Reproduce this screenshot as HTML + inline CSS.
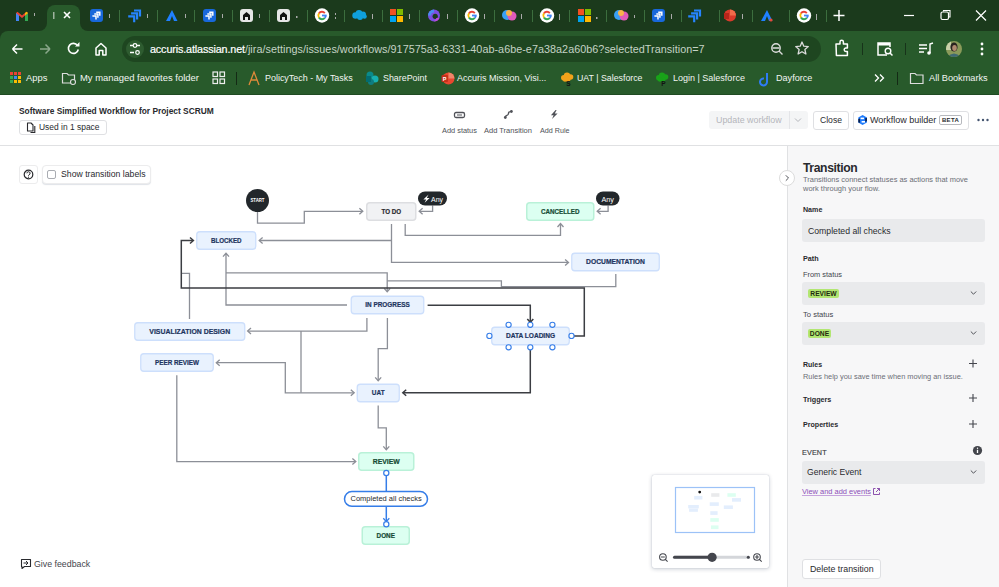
<!DOCTYPE html>
<html><head><meta charset="utf-8">
<style>
*{box-sizing:border-box;margin:0;padding:0}
html,body{width:999px;height:587px;overflow:hidden;background:#fff;font-family:"Liberation Sans",sans-serif;position:relative}
.a{position:absolute}
#tabs{left:0;top:0;width:999px;height:31px;background:#1b3a1c}
#toolbar{left:0;top:31px;width:999px;height:64px;background:#285a2b}
.sep{position:absolute;width:1px;background:#3d7a40}
.tt{color:#f2f5f2;font-size:12.5px;white-space:nowrap}
.hdr{left:0;top:95px;width:999px;height:51px;background:#fff;border-bottom:1px solid #e0e1e3}
.btn{position:absolute;border:1px solid #dfe0e3;border-radius:3px;background:#fff;color:#292a2e;font-size:9px;white-space:nowrap}
#panel{left:787px;top:146px;width:212px;height:441px;background:#f7f7f8;border-left:1px solid #e0e1e3}
.pl{position:absolute;left:14px;font-size:8px;color:#292a2e;font-weight:700;white-space:nowrap}
.ps{position:absolute;left:14px;font-size:8px;color:#505258;white-space:nowrap}
.sel{position:absolute;left:14px;width:183px;background:#e9eaec;border-radius:3px}
.chev{position:absolute;right:8px;top:50%;width:5px;height:5px;border-right:1.3px solid #44546f;border-bottom:1.3px solid #44546f;transform:translateY(-70%) rotate(45deg)}
.st{position:absolute;border-radius:3px;font-size:7.4px;font-weight:700;display:flex;align-items:center;justify-content:center;white-space:nowrap;letter-spacing:0.1px}
.bl{background:#e9f2ff;border:1px solid #cce0ff;color:#1c2b41}
.gr{background:#dcfff1;border:1px solid #baf3db;color:#164b35}
.gy{background:#f1f2f4;border:1px solid #dcdfe4;color:#172b4d}
</style></head><body>

<!-- ============ BROWSER TAB STRIP ============ -->
<div id="tabs" class="a"></div>
<!-- active tab -->
<div class="a" style="left:47px;top:5px;width:33px;height:27px;background:#285a2b;border-radius:8px 8px 0 0"></div>
<div class="a" style="left:39px;top:23px;width:8px;height:8px;background:#285a2b"></div>
<div class="a" style="left:31px;top:15px;width:16px;height:16px;background:#1b3a1c;border-radius:0 0 8px 0"></div>
<div class="a" style="left:80px;top:23px;width:8px;height:8px;background:#285a2b"></div>
<div class="a" style="left:80px;top:15px;width:16px;height:16px;background:#1b3a1c;border-radius:0 0 0 8px"></div>

<div class="a" style="left:0;top:31px;width:10px;height:10px;background:#1b3a1c"></div><div id="toolbar" class="a" style="border-radius:8px 0 0 0"></div>
<div class="a" style="left:0;top:94px;width:999px;height:1px;background:#1f4a22"></div>

<!-- tab icons -->
<svg class="a" style="left:0;top:0" width="999" height="31">
 <!-- gmail -->
 <g transform="translate(16,11)">
  <path d="M0 2 L0 10 L3 10 L3 4.5 L6 7 L9 4.5 L9 10 L12 10 L12 2 L10.5 0.8 L6 4.5 L1.5 0.8 Z" fill="#ea4335"/>
  <path d="M0 2 L0 10 L3 10 L3 4.5 Z" fill="#4285f4"/><path d="M12 2 L12 10 L9 10 L9 4.5 Z" fill="#34a853"/>
  <path d="M10.5 0.8 L12 2 L9 4.5 L9 2 Z" fill="#fbbc04"/>
 </g>
 <rect x="34" y="13" width="1" height="3" fill="#aaa"/>
 <rect x="53" y="12" width="1.5" height="7" fill="#9fb39f"/>
 <path d="M64 12 L70 18 M70 12 L64 18" stroke="#fff" stroke-width="1.6"/>
 <!-- jira squares -->
 <rect x="90" y="9" width="13" height="13" rx="3" fill="#1868db"/><path d="M96.2 12.2 H99.8 V15.799999999999999" stroke="#fff" stroke-width="1.5" fill="none"/><path d="M94.3 14.1 H97.89999999999999 V17.7" stroke="#fff" stroke-width="1.5" fill="none"/><path d="M92.4 16.0 H96.0 V19.6" stroke="#fff" stroke-width="1.5" fill="none"/>
 <rect x="109" y="14" width="1" height="4" fill="#aaa"/>
 <rect x="119" y="10" width="1" height="12" fill="#3c6e3e"/>
 <!-- jira stacked -->
 <path d="M134.0 10.5 H140.0 V16.5" stroke="#2684ff" stroke-width="2.2" fill="none"/><path d="M131.1 13.4 H137.1 V19.4" stroke="#2684ff" stroke-width="2.2" fill="none"/><path d="M128.2 16.3 H134.2 V22.3" stroke="#2684ff" stroke-width="2.2" fill="none"/>
 <rect x="147" y="14" width="1" height="4" fill="#aaa"/>
 <rect x="157" y="10" width="1" height="12" fill="#3c6e3e"/>
 <!-- atlassian A -->
 <path d="M172 10 l5.5 11 h-3.5 l-2 -5 l-2 5 h-4 z" fill="#1f80ff"/>
 <rect x="185" y="14" width="1" height="4" fill="#aaa"/>
 <rect x="194" y="10" width="1" height="12" fill="#3c6e3e"/>
 <rect x="203" y="9" width="13" height="13" rx="3" fill="#1868db"/><path d="M209.20000000000002 12.2 H212.8 V15.799999999999999" stroke="#fff" stroke-width="1.5" fill="none"/><path d="M207.3 14.1 H210.9 V17.7" stroke="#fff" stroke-width="1.5" fill="none"/><path d="M205.4 16.0 H209.0 V19.6" stroke="#fff" stroke-width="1.5" fill="none"/>
 <rect x="222" y="14" width="1" height="4" fill="#aaa"/>
 <rect x="232" y="10" width="1" height="12" fill="#3c6e3e"/>
 <rect x="240" y="9" width="13" height="13" rx="3" fill="#e6e6e6"/><path d="M243 20 v-5 l3.5 -3 l3.5 3 v5 h-2 v-3 h-3 v3z" fill="#111"/>
 <rect x="259" y="14" width="1" height="4" fill="#aaa"/>
 <rect x="269" y="10" width="1" height="12" fill="#3c6e3e"/>
 <rect x="277" y="9" width="13" height="13" rx="3" fill="#e6e6e6"/><path d="M280 20 v-5 l3.5 -3 l3.5 3 v5 h-2 v-3 h-3 v3z" fill="#111"/>
 <rect x="296" y="16" width="1.5" height="2" fill="#aaa"/>
 <rect x="307" y="10" width="1" height="12" fill="#3c6e3e"/>
 <g id="gg"><circle cx="322" cy="15.5" r="7.2" fill="#fff"/><path d="M318.97 13.38 A3.7 3.7 0 0 1 324.83 13.12" stroke="#ea4335" stroke-width="1.9" fill="none"/><path d="M318.97 17.62 A3.7 3.7 0 0 1 318.97 13.38" stroke="#fbbc04" stroke-width="1.9" fill="none"/><path d="M324.83 17.88 A3.7 3.7 0 0 1 318.97 17.62" stroke="#34a853" stroke-width="1.9" fill="none"/><path d="M325.70 15.50 A3.7 3.7 0 0 1 324.83 17.88" stroke="#4285f4" stroke-width="1.9" fill="none"/><path d="M322 15.5 H326.59999999999997" stroke="#4285f4" stroke-width="1.8"/></g>
 <rect x="335" y="13" width="1" height="2" fill="#aaa"/><rect x="335" y="17" width="1" height="2" fill="#aaa"/>
 <rect x="344" y="10" width="1" height="12" fill="#3c6e3e"/>
 <g fill="#0fa0dc"><circle cx="355.5" cy="15.5" r="3.2"/><circle cx="359" cy="13.2" r="3.3"/><circle cx="363" cy="14.5" r="3"/><circle cx="360" cy="17" r="3"/><circle cx="364.5" cy="16.5" r="2.3"/></g>
 <rect x="372" y="14" width="1" height="5" fill="#aaa"/>
 <rect x="382" y="10" width="1" height="12" fill="#3c6e3e"/>
 <rect x="390" y="9" width="6" height="6" fill="#f25022"/><rect x="397" y="9" width="6" height="6" fill="#7fba00"/><rect x="390" y="16" width="6" height="6" fill="#00a4ef"/><rect x="397" y="16" width="6" height="6" fill="#ffb900"/>
 <rect x="409" y="14" width="1" height="5" fill="#aaa"/>
 <rect x="419" y="10" width="1" height="12" fill="#3c6e3e"/>
 <circle cx="434" cy="15.5" r="6" fill="#7b4fe0"/><path d="M428 15.5 a6 6 0 0 1 6 -6 v3 a3 3 0 0 0 -3 3z" fill="#4a8cf0"/><circle cx="435.2" cy="16.3" r="2.6" fill="#1b3a1c"/><path d="M434 21.5 a6 6 0 0 0 5.5 -3.5 h-3z" fill="#c04ad8"/>
 <rect x="447" y="14" width="1" height="5" fill="#aaa"/>
 <rect x="457" y="10" width="1" height="12" fill="#3c6e3e"/>
 <circle cx="472" cy="15.5" r="7.2" fill="#fff"/><path d="M468.97 13.38 A3.7 3.7 0 0 1 474.83 13.12" stroke="#ea4335" stroke-width="1.9" fill="none"/><path d="M468.97 17.62 A3.7 3.7 0 0 1 468.97 13.38" stroke="#fbbc04" stroke-width="1.9" fill="none"/><path d="M474.83 17.88 A3.7 3.7 0 0 1 468.97 17.62" stroke="#34a853" stroke-width="1.9" fill="none"/><path d="M475.70 15.50 A3.7 3.7 0 0 1 474.83 17.88" stroke="#4285f4" stroke-width="1.9" fill="none"/><path d="M472 15.5 H476.59999999999997" stroke="#4285f4" stroke-width="1.8"/>
 <rect x="484" y="14" width="1" height="5" fill="#aaa"/>
 <rect x="494" y="10" width="1" height="12" fill="#3c6e3e"/>
 <circle cx="507" cy="15" r="5" fill="#3aa0f3"/><circle cx="512" cy="16" r="4.5" fill="#e05ab8"/><circle cx="509" cy="13" r="3" fill="#f8b24a"/>
 <rect x="521" y="14" width="1" height="5" fill="#aaa"/>
 <rect x="532" y="10" width="1" height="12" fill="#3c6e3e"/>
 <circle cx="547" cy="15.5" r="7.2" fill="#fff"/><path d="M543.97 13.38 A3.7 3.7 0 0 1 549.83 13.12" stroke="#ea4335" stroke-width="1.9" fill="none"/><path d="M543.97 17.62 A3.7 3.7 0 0 1 543.97 13.38" stroke="#fbbc04" stroke-width="1.9" fill="none"/><path d="M549.83 17.88 A3.7 3.7 0 0 1 543.97 17.62" stroke="#34a853" stroke-width="1.9" fill="none"/><path d="M550.70 15.50 A3.7 3.7 0 0 1 549.83 17.88" stroke="#4285f4" stroke-width="1.9" fill="none"/><path d="M547 15.5 H551.6" stroke="#4285f4" stroke-width="1.8"/>
 <rect x="559" y="14" width="1" height="6" fill="#aaa"/>
 <rect x="569" y="10" width="1" height="12" fill="#3c6e3e"/>
 <rect x="578" y="9" width="6" height="6" fill="#f25022"/><rect x="585" y="9" width="6" height="6" fill="#7fba00"/><rect x="578" y="16" width="6" height="6" fill="#00a4ef"/><rect x="585" y="16" width="6" height="6" fill="#ffb900"/>
 <rect x="596" y="17" width="1.5" height="2" fill="#aaa"/>
 <rect x="606" y="10" width="1" height="12" fill="#3c6e3e"/>
 <circle cx="619" cy="15" r="5" fill="#3aa0f3"/><circle cx="624" cy="16" r="4.5" fill="#e05ab8"/><circle cx="621" cy="13" r="3" fill="#f8b24a"/>
 <rect x="634" y="15" width="1" height="3" fill="#aaa"/>
 <rect x="644" y="10" width="1" height="12" fill="#3c6e3e"/>
 <rect x="652" y="9" width="13" height="13" rx="3" fill="#1868db"/><path d="M658.1999999999999 12.2 H661.8 V15.799999999999999" stroke="#fff" stroke-width="1.5" fill="none"/><path d="M656.3 14.1 H659.9 V17.7" stroke="#fff" stroke-width="1.5" fill="none"/><path d="M654.4 16.0 H658.0 V19.6" stroke="#fff" stroke-width="1.5" fill="none"/>
 <rect x="671" y="14" width="1" height="5" fill="#aaa"/>
 <rect x="681" y="10" width="1" height="12" fill="#3c6e3e"/>
 <path d="M694.0 10.5 H700.0 V16.5" stroke="#2684ff" stroke-width="2.2" fill="none"/><path d="M691.1 13.4 H697.1 V19.4" stroke="#2684ff" stroke-width="2.2" fill="none"/><path d="M688.2 16.3 H694.2 V22.3" stroke="#2684ff" stroke-width="2.2" fill="none"/>
 <rect x="719" y="10" width="1" height="12" fill="#3c6e3e"/>
 <circle cx="730" cy="15.5" r="6" fill="#d93a2b"/><path d="M730 9.5 a6 6 0 0 1 6 6 h-6z" fill="#f06b4a"/><rect x="724" y="13" width="5" height="6" fill="#b7251a"/>
 <rect x="742" y="14" width="1" height="5" fill="#aaa"/>
 <rect x="752" y="10" width="1" height="12" fill="#3c6e3e"/>
 <path d="M767 10 l5.5 11 h-3.5 l-2 -5 l-2 5 h-4 z" fill="#1f80ff"/><circle cx="771" cy="20" r="1.6" fill="#e5493a"/>
 <rect x="789" y="10" width="1" height="12" fill="#3c6e3e"/>
 <circle cx="804" cy="15.5" r="7.2" fill="#fff"/><path d="M800.97 13.38 A3.7 3.7 0 0 1 806.83 13.12" stroke="#ea4335" stroke-width="1.9" fill="none"/><path d="M800.97 17.62 A3.7 3.7 0 0 1 800.97 13.38" stroke="#fbbc04" stroke-width="1.9" fill="none"/><path d="M806.83 17.88 A3.7 3.7 0 0 1 800.97 17.62" stroke="#34a853" stroke-width="1.9" fill="none"/><path d="M807.70 15.50 A3.7 3.7 0 0 1 806.83 17.88" stroke="#4285f4" stroke-width="1.9" fill="none"/><path d="M804 15.5 H808.6" stroke="#4285f4" stroke-width="1.8"/>
 <rect x="816" y="14" width="1" height="6" fill="#aaa"/>
 <rect x="826" y="10" width="1" height="12" fill="#3c6e3e"/>
 <path d="M839 10 v11 M833.5 15.5 h11" stroke="#fff" stroke-width="1.5"/>
 <path d="M904 15.5 h10" stroke="#fff" stroke-width="1.2"/>
 <rect x="941" y="12" width="7.5" height="7.5" rx="1.5" stroke="#fff" stroke-width="1.2" fill="none"/><path d="M943.5 11.5 v-1 h6.5 v6.5 h-1" stroke="#fff" stroke-width="1.1" fill="none"/>
 <path d="M976 10.5 l10 10 M986 10.5 l-10 10" stroke="#fff" stroke-width="1.2"/>
</svg>

<!-- toolbar -->
<svg class="a" style="left:0;top:31px" width="999" height="64">
 <path d="M12.5 18 h10 M12.5 18 l4.5 -4.5 M12.5 18 l4.5 4.5" stroke="#fff" stroke-width="1.5" fill="none"/>
 <path d="M40 18 h10 M50 18 l-4.5 -4.5 M50 18 l-4.5 4.5" stroke="#8aa88b" stroke-width="1.5" fill="none"/>
 <path d="M77.5 14.5 a5 5 0 1 0 0.8 4" stroke="#fff" stroke-width="1.6" fill="none"/><path d="M79.5 11 v4.5 h-4.5z" fill="#fff"/>
 <path d="M96 24 v-7 l5 -4.5 l5 4.5 v7 h-3.2 v-4.5 h-3.6 v4.5 z" stroke="#fff" stroke-width="1.5" fill="none" stroke-linejoin="round"/>
 <rect x="122" y="5" width="699" height="26" rx="13" fill="#1e4620"/>
 <circle cx="135" cy="18" r="9" fill="#2e5c30"/>
 <path d="M130 14.5 h3 M137 14.5 h3 M130 21.5 h4 M140 21.5 h0" stroke="#fff" stroke-width="1.3"/><circle cx="135" cy="14.5" r="1.8" stroke="#fff" stroke-width="1.2" fill="none"/><circle cx="137.5" cy="21.5" r="1.8" stroke="#fff" stroke-width="1.2" fill="none"/>
 <circle cx="776" cy="17" r="4.2" stroke="#ddd" stroke-width="1.4" fill="none"/><path d="M772.5 17 h7 M779 20 l3.5 3.5" stroke="#ddd" stroke-width="1.4"/>
 <path d="M802 11 l1.8 4.2 l4.5 .4 l-3.4 3 l1 4.4 l-3.9 -2.3 l-3.9 2.3 l1 -4.4 l-3.4 -3 l4.5 -.4z" stroke="#ddd" stroke-width="1.3" fill="none" stroke-linejoin="round"/>
 <path d="M836 13 h4 v-2 a1.7 1.7 0 0 1 3.4 0 v2 h4 v4 h-1.5 a1.7 1.7 0 0 0 0 3.4 h1.5 v4 h-11 z" stroke="#fff" stroke-width="1.5" fill="none" stroke-linejoin="round"/>
 <rect x="862" y="12" width="1" height="12" fill="#17331a"/>
 <path d="M887 24 h-9 v-12 h12 v4" stroke="#fff" stroke-width="1.5" fill="none"/><circle cx="888" cy="20" r="2.8" stroke="#fff" stroke-width="1.4" fill="none"/><path d="M890 22 l2.5 2.5" stroke="#fff" stroke-width="1.5"/><rect x="878" y="12" width="12" height="2.5" fill="#fff"/>
 <rect x="905" y="12" width="1" height="12" fill="#17331a"/>
 <path d="M919 14 h8 M919 17.5 h8 M919 21 h5" stroke="#fff" stroke-width="1.4"/><path d="M930 22 v-9 l3 -1" stroke="#fff" stroke-width="1.4" fill="none"/><circle cx="929" cy="22" r="1.8" fill="#fff"/>
 <clipPath id="av"><circle cx="954" cy="18" r="8"/></clipPath><g clip-path="url(#av)"><rect x="945" y="9" width="18" height="18" fill="#8a9a5a"/><rect x="945" y="9" width="6" height="10" fill="#c8d0a8"/><ellipse cx="954" cy="16" rx="3.6" ry="4.6" fill="#2a2420"/><ellipse cx="954.5" cy="17" rx="2.3" ry="3" fill="#b08a70"/><path d="M946 27 q8 -9 16 0z" fill="#3f6a72"/></g>
 <circle cx="982" cy="13" r="1.4" fill="#fff"/><circle cx="982" cy="18" r="1.4" fill="#fff"/><circle cx="982" cy="23" r="1.4" fill="#fff"/>
</svg>
<div class="a tt" style="left:150px;font-size:10.8px;letter-spacing:0px;top:43px"><span style="color:#fff;letter-spacing:-0.14px;-webkit-text-stroke:0.2px #fff">accuris.atlassian.net</span><span style="color:#c5d3c5;letter-spacing:0.034px">/jira/settings/issues/workflows/917575a3-6331-40ab-a6be-e7a38a2a60b6?selectedTransition=7</span></div>

<!-- bookmarks bar -->
<svg class="a" style="left:0;top:65px" width="999" height="30">
 <g>
  <rect x="10" y="7" width="3" height="3" fill="#ea4335"/><rect x="14" y="7" width="3" height="3" fill="#ea4335"/><rect x="18" y="7" width="3" height="3" fill="#ea4335"/>
  <rect x="10" y="11" width="3" height="3" fill="#34a853"/><rect x="14" y="11" width="3" height="3" fill="#4285f4"/><rect x="18" y="11" width="3" height="3" fill="#fbbc04"/>
  <rect x="10" y="15" width="3" height="3" fill="#34a853"/><rect x="14" y="15" width="3" height="3" fill="#fbbc04"/><rect x="18" y="15" width="3" height="3" fill="#fbbc04"/>
 </g>
 <path d="M62.5 8.5 h4.5 l1.5 1.5 h6 v8 h-12 z" stroke="#ddd" stroke-width="1.2" fill="none"/><circle cx="73" cy="17" r="2.5" fill="#285a2b" stroke="#ddd" stroke-width="1.1"/>
 <rect x="213" y="7" width="4.5" height="4.5" stroke="#eee" stroke-width="1.2" fill="none"/><rect x="220" y="7" width="4.5" height="4.5" stroke="#eee" stroke-width="1.2" fill="none"/><rect x="213" y="14" width="4.5" height="4.5" stroke="#eee" stroke-width="1.2" fill="none"/><rect x="220" y="14" width="4.5" height="4.5" stroke="#eee" stroke-width="1.2" fill="none"/>
 <rect x="236" y="7" width="1" height="13" fill="#142a15"/>
 <path d="M249 20 l5 -13 l5 13 M251 15 h6" stroke="#e08a3a" stroke-width="1.3" fill="none"/>
 <circle cx="370" cy="10" r="3.5" fill="#0a8a8a"/><circle cx="375" cy="14" r="3.5" fill="#17b0b0"/><circle cx="371" cy="17" r="3" fill="#0f7c80"/><rect x="366" y="11" width="5" height="6" fill="#036c70"/>
 <circle cx="448.5" cy="13.5" r="6" fill="#e8472f"/><path d="M448.5 7.5 a6 6 0 0 1 6 6 h-6z" fill="#f0866a"/><rect x="441.5" y="10" width="6.5" height="7" rx="1" fill="#c4311b"/><text x="442.8" y="15.8" font-size="5.5" font-weight="700" fill="#fff">P</text>
 <g fill="#f2a31b"><circle cx="563.8" cy="12.8" r="2.8"/><circle cx="567" cy="10.8" r="3.2"/><circle cx="570.5" cy="12" r="2.8"/><circle cx="568" cy="14.2" r="2.5"/><circle cx="565" cy="14.5" r="2.2"/></g><text x="566.2" y="20.8" font-size="6.5" font-weight="700" fill="#111">S</text>
 <g fill="#19a319"><circle cx="658.8" cy="12.8" r="2.8"/><circle cx="662" cy="10.8" r="3.2"/><circle cx="665.5" cy="12" r="2.8"/><circle cx="663" cy="14.2" r="2.5"/><circle cx="660" cy="14.5" r="2.2"/></g><text x="661.2" y="20.8" font-size="6.5" font-weight="700" fill="#111">P</text>
 <path d="M767 8 v9 a3.5 3.5 0 1 1 -3 -3.5" stroke="#2f7cf6" stroke-width="2" fill="none"/>
 <path d="M875 9.5 l3.5 3.5 l-3.5 3.5 M880 9.5 l3.5 3.5 l-3.5 3.5" stroke="#fff" stroke-width="1.3" fill="none"/>
 <rect x="897" y="7" width="1" height="13" fill="#142a15"/>
 <path d="M910.5 8.5 h4.5 l1.5 1.5 h6.5 v8.5 h-12.5 z" stroke="#ddd" stroke-width="1.2" fill="none"/>
</svg>
<div class="a tt" style="left:26px;top:72.20px;font-size:9.4px">Apps</div>
<div class="a tt" style="left:80px;top:72.17px;font-size:9.43px">My managed favorites folder</div>
<div class="a tt" style="left:265px;top:72.63px;font-size:8.95px">PolicyTech - My Tasks</div>
<div class="a tt" style="left:383px;top:72.67px;font-size:8.9px">SharePoint</div>
<div class="a tt" style="left:457px;top:72.58px;font-size:9.0px">Accuris Mission, Visi...</div>
<div class="a tt" style="left:577px;top:72.77px;font-size:8.8px">UAT | Salesforce</div>
<div class="a tt" style="left:673px;top:72.58px;font-size:9.0px">Login | Salesforce</div>
<div class="a tt" style="left:776px;top:73.4px;font-size:9.1px">Dayforce</div>
<div class="a tt" style="left:929px;top:73.3px;font-size:9.2px">All Bookmarks</div>


<!-- ============ JIRA HEADER ============ -->
<div class="a hdr"></div>


<!-- header content -->
<div class="a" style="left:19px;top:106px;font-size:8.4px;font-weight:700;color:#292a2e;white-space:nowrap">Software Simplified Workflow for Project SCRUM</div>
<div class="btn" style="left:19px;top:120px;width:88px;height:15px"></div>
<svg class="a" style="left:26px;top:121.5px" width="11" height="12"><path d="M1.5 1 h3.5 l2 2 v6 h-5.5 z" stroke="#292a2e" stroke-width="1.1" fill="none" stroke-linejoin="round"/><path d="M8.8 4 v6.5 h-4.3" stroke="#292a2e" stroke-width="1.1" fill="none"/></svg>
<div class="a" style="left:39px;top:122.3px;font-size:8.45px;color:#292a2e;white-space:nowrap">Used in 1 space</div>

<svg class="a" style="left:440px;top:105px" width="140" height="18">
 <rect x="14.5" y="7.5" width="10" height="5" rx="1.5" stroke="#505258" stroke-width="1.3" fill="none"/><path d="M17 10 h5" stroke="#505258" stroke-width="1"/>
 <path d="M65.3 12.3 C65.3 9.5 68.3 10.5 68.3 9.3 C68.3 7.5 68.6 6.5 71.4 6.5" stroke="#505258" stroke-width="1.2" fill="none"/><circle cx="65.3" cy="12.5" r="1.4" fill="#505258"/><circle cx="71.4" cy="6.5" r="1.4" fill="#505258"/>
 <path d="M115.6 4.9 L110.9 10.2 H113.6 L112 14 L117.6 8.4 H114.8 L116.6 4.9Z" fill="#505258"/>
</svg>
<div class="a" style="left:442px;top:125.5px;font-size:7.4px;color:#505258;white-space:nowrap">Add status</div>
<div class="a" style="left:484px;top:125.5px;font-size:7.5px;color:#505258;white-space:nowrap">Add Transition</div>
<div class="a" style="left:540px;top:125.5px;font-size:7.2px;color:#505258;white-space:nowrap">Add Rule</div>

<div class="a" style="left:709px;top:111px;width:99px;height:18px;background:#f4f5f6;border-radius:3px"></div>
<div class="a" style="left:789px;top:111px;width:1px;height:18px;background:#e4e5e8"></div>
<div class="a" style="left:716px;top:115px;font-size:8.9px;color:#b4b6bb;white-space:nowrap">Update workflow</div>
<svg class="a" style="left:794px;top:117px" width="8" height="6"><path d="M1 1.5 l3 3 l3 -3" stroke="#b4b6bb" stroke-width="1" fill="none"/></svg>
<div class="btn" style="left:813px;top:111px;width:36px;height:19px"></div>
<div class="a" style="left:820px;top:115px;font-size:8.6px;color:#292a2e;white-space:nowrap">Close</div>
<div class="btn" style="left:853px;top:111px;width:116px;height:19px"></div>
<svg class="a" style="left:857px;top:114px" width="12" height="12"><path d="M5.6 1 L9.9 3.5 V8.5 L5.6 11 L1.3 8.5 V3.5 Z" fill="#1d7afc"/><path d="M1.3 5 L3 4.4 V8.8 L1.3 8.5Z" fill="#0a1f4a"/><path d="M8.2 4.3 L9.9 3.8 V7.2 L8.2 7.7Z" fill="#0a1f4a"/><rect x="3.6" y="3.6" width="3.4" height="1.6" fill="#fff"/><rect x="4.6" y="7" width="3.4" height="1.6" fill="#fff"/></svg>
<div class="a" style="left:870px;top:115px;font-size:9px;color:#292a2e;white-space:nowrap">Workflow builder</div>
<div class="a" style="left:939px;top:115px;width:23px;height:10px;border:1px solid #b7b9be;border-radius:2px;font-size:6px;font-weight:700;color:#292a2e;text-align:center;line-height:8px;letter-spacing:0.3px">BETA</div>
<svg class="a" style="left:975px;top:117px" width="16" height="6"><circle cx="3.5" cy="3" r="1.2" fill="#44546f"/><circle cx="8" cy="3" r="1.2" fill="#44546f"/><circle cx="12.5" cy="3" r="1.2" fill="#44546f"/></svg>

<svg class="a" style="left:0;top:0" width="999" height="587">
<path d="M257.5 212 V223.1 H304.3 V211.3 H362.5" stroke="#8c8f97" stroke-width="1.3" fill="none"/>
<path d="M432.6 205.5 V211.3 H419.5" stroke="#8c8f97" stroke-width="1.3" fill="none"/>
<path d="M608.1 205.5 V211.3 H597.5" stroke="#8c8f97" stroke-width="1.3" fill="none"/>
<path d="M405.2 224 V235.4 H560.5 V224" stroke="#8c8f97" stroke-width="1.3" fill="none"/>
<path d="M391.5 224 V262.4 H568" stroke="#8c8f97" stroke-width="1.3" fill="none"/>
<path d="M391.5 240.5 H259.5" stroke="#8c8f97" stroke-width="1.3" fill="none"/>
<path d="M226 272.8 H387.2 V291.5" stroke="#8c8f97" stroke-width="1.3" fill="none"/>
<path d="M615.8 274 V286.6 H501.4 V280.9 H387.2" stroke="#8c8f97" stroke-width="1.3" fill="none"/>
<path d="M347 305 H226 V253.5" stroke="#8c8f97" stroke-width="1.3" fill="none"/>
<path d="M366.9 318 V331.1 H248" stroke="#8c8f97" stroke-width="1.3" fill="none"/>
<path d="M189.5 319 V273.4 H181.2" stroke="#8c8f97" stroke-width="1.3" fill="none"/>
<path d="M301 331.1 V392.8" stroke="#8c8f97" stroke-width="1.3" fill="none"/>
<path d="M216.5 362.7 H285.3 V392.8 H354" stroke="#8c8f97" stroke-width="1.3" fill="none"/>
<path d="M387.4 318 V348.6 H378.2 V380.5" stroke="#8c8f97" stroke-width="1.3" fill="none"/>
<path d="M378.2 405.6 V427.9 H386.3 V449.5" stroke="#8c8f97" stroke-width="1.3" fill="none"/>
<path d="M176.8 375.3 V461.6 H355.5" stroke="#8c8f97" stroke-width="1.3" fill="none"/>
<path d="M359.40000000000003 208.3 L362.8 211.3 L359.40000000000003 214.3" stroke="#8c8f97" stroke-width="1.3" fill="none" stroke-linejoin="miter"/>
<path d="M422.59999999999997 208.3 L419.2 211.3 L422.59999999999997 214.3" stroke="#8c8f97" stroke-width="1.3" fill="none" stroke-linejoin="miter"/>
<path d="M600.6 208.3 L597.2 211.3 L600.6 214.3" stroke="#8c8f97" stroke-width="1.3" fill="none" stroke-linejoin="miter"/>
<path d="M557.5 227.0 L560.5 223.6 L563.5 227.0" stroke="#8c8f97" stroke-width="1.3" fill="none" stroke-linejoin="miter"/>
<path d="M565.1 259.4 L568.5 262.4 L565.1 265.4" stroke="#8c8f97" stroke-width="1.3" fill="none" stroke-linejoin="miter"/>
<path d="M262.59999999999997 237.5 L259.2 240.5 L262.59999999999997 243.5" stroke="#8c8f97" stroke-width="1.3" fill="none" stroke-linejoin="miter"/>
<path d="M384.2 288.40000000000003 L387.2 291.8 L390.2 288.40000000000003" stroke="#8c8f97" stroke-width="1.3" fill="none" stroke-linejoin="miter"/>
<path d="M223.0 256.59999999999997 L226 253.2 L229.0 256.59999999999997" stroke="#8c8f97" stroke-width="1.3" fill="none" stroke-linejoin="miter"/>
<path d="M251.0 328.1 L247.6 331.1 L251.0 334.1" stroke="#8c8f97" stroke-width="1.3" fill="none" stroke-linejoin="miter"/>
<path d="M350.8 389.8 L354.2 392.8 L350.8 395.8" stroke="#8c8f97" stroke-width="1.3" fill="none" stroke-linejoin="miter"/>
<path d="M219.70000000000002 359.7 L216.3 362.7 L219.70000000000002 365.7" stroke="#8c8f97" stroke-width="1.3" fill="none" stroke-linejoin="miter"/>
<path d="M375.2 377.40000000000003 L378.2 380.8 L381.2 377.40000000000003" stroke="#8c8f97" stroke-width="1.3" fill="none" stroke-linejoin="miter"/>
<path d="M383.3 446.40000000000003 L386.3 449.8 L389.3 446.40000000000003" stroke="#8c8f97" stroke-width="1.3" fill="none" stroke-linejoin="miter"/>
<path d="M352.40000000000003 458.6 L355.8 461.6 L352.40000000000003 464.6" stroke="#8c8f97" stroke-width="1.3" fill="none" stroke-linejoin="miter"/>
<path d="M571.5 335.9 H584.3 V288.1 H181.3 V240.5 H193" stroke="#3b3d42" stroke-width="1.5" fill="none"/>
<path d="M427.6 305.2 H530.3 V322" stroke="#3b3d42" stroke-width="1.5" fill="none"/>
<path d="M530.3 350 V392.8 H403" stroke="#3b3d42" stroke-width="1.5" fill="none"/>
<path d="M190.0 237.5 L193.4 240.5 L190.0 243.5" stroke="#3b3d42" stroke-width="1.5" fill="none" stroke-linejoin="miter"/>
<path d="M527.3 318.90000000000003 L530.3 322.3 L533.3 318.90000000000003" stroke="#3b3d42" stroke-width="1.5" fill="none" stroke-linejoin="miter"/>
<path d="M406.2 389.8 L402.8 392.8 L406.2 395.8" stroke="#3b3d42" stroke-width="1.5" fill="none" stroke-linejoin="miter"/>
<circle cx="257.5" cy="200.5" r="11.5" fill="#22272b"/><text x="257.5" y="202.2" text-anchor="middle" font-size="4.6" font-weight="700" fill="#fff" textLength="14" lengthAdjust="spacingAndGlyphs">START</text>
<rect x="366.75" y="202.75" width="49.0" height="17.5" rx="3" fill="#f1f2f4" stroke="#dddee1" stroke-width="1.5"/><text x="391.25" y="213.60" text-anchor="middle" font-size="6.8" font-weight="700" fill="#292a2e" stroke="#292a2e" stroke-width="0.2" textLength="19.6" lengthAdjust="spacingAndGlyphs">TO DO</text>
<rect x="526.75" y="202.75" width="67.0" height="17.5" rx="3" fill="#dcfff1" stroke="#b9f1d8" stroke-width="1.5"/><text x="560.25" y="213.60" text-anchor="middle" font-size="6.8" font-weight="700" fill="#164b35" stroke="#164b35" stroke-width="0.2" textLength="38.7" lengthAdjust="spacingAndGlyphs">CANCELLED</text>
<rect x="196.75" y="231.75" width="59.0" height="17.5" rx="3" fill="#e9f2fe" stroke="#cddffc" stroke-width="1.3"/><text x="226.25" y="242.60" text-anchor="middle" font-size="6.8" font-weight="700" fill="#1e3560" stroke="#1e3560" stroke-width="0.2" textLength="30.7" lengthAdjust="spacingAndGlyphs">BLOCKED</text>
<rect x="571.75" y="253.25" width="87.5" height="17.5" rx="3" fill="#e9f2fe" stroke="#cddffc" stroke-width="1.3"/><text x="615.5" y="264.10" text-anchor="middle" font-size="6.8" font-weight="700" fill="#1e3560" stroke="#1e3560" stroke-width="0.2" textLength="58.8" lengthAdjust="spacingAndGlyphs">DOCUMENTATION</text>
<rect x="351.25" y="296.25" width="72.5" height="17.5" rx="3" fill="#e9f2fe" stroke="#cddffc" stroke-width="1.3"/><text x="387.5" y="307.10" text-anchor="middle" font-size="6.8" font-weight="700" fill="#1e3560" stroke="#1e3560" stroke-width="0.2" textLength="44.3" lengthAdjust="spacingAndGlyphs">IN PROGRESS</text>
<rect x="491.75" y="327.25" width="77.5" height="17.5" rx="3" fill="#e9f2fe" stroke="#cddffc" stroke-width="1.3"/><text x="530.5" y="338.10" text-anchor="middle" font-size="6.8" font-weight="700" fill="#1e3560" stroke="#1e3560" stroke-width="0.2" textLength="49.1" lengthAdjust="spacingAndGlyphs">DATA LOADING</text>
<rect x="134.75" y="322.75" width="110.0" height="17.5" rx="3" fill="#e9f2fe" stroke="#cddffc" stroke-width="1.3"/><text x="189.75" y="333.60" text-anchor="middle" font-size="6.8" font-weight="700" fill="#1e3560" stroke="#1e3560" stroke-width="0.2" textLength="80.8" lengthAdjust="spacingAndGlyphs">VISUALIZATION DESIGN</text>
<rect x="140.75" y="353.75" width="72.5" height="17.5" rx="3" fill="#e9f2fe" stroke="#cddffc" stroke-width="1.3"/><text x="177.0" y="364.60" text-anchor="middle" font-size="6.8" font-weight="700" fill="#1e3560" stroke="#1e3560" stroke-width="0.2" textLength="44" lengthAdjust="spacingAndGlyphs">PEER REVIEW</text>
<rect x="357.25" y="384.25" width="42.0" height="17.5" rx="3" fill="#e9f2fe" stroke="#cddffc" stroke-width="1.3"/><text x="378.25" y="395.10" text-anchor="middle" font-size="6.8" font-weight="700" fill="#1e3560" stroke="#1e3560" stroke-width="0.2" textLength="12.8" lengthAdjust="spacingAndGlyphs">UAT</text>
<rect x="358.75" y="452.75" width="55.0" height="17.5" rx="3" fill="#dcfff1" stroke="#b9f1d8" stroke-width="1.5"/><text x="386.25" y="463.60" text-anchor="middle" font-size="6.8" font-weight="700" fill="#164b35" stroke="#164b35" stroke-width="0.2" textLength="27" lengthAdjust="spacingAndGlyphs">REVIEW</text>
<rect x="362.25" y="526.75" width="47.0" height="17.5" rx="3" fill="#dcfff1" stroke="#b9f1d8" stroke-width="1.5"/><text x="385.75" y="537.60" text-anchor="middle" font-size="6.8" font-weight="700" fill="#164b35" stroke="#164b35" stroke-width="0.2" textLength="18.3" lengthAdjust="spacingAndGlyphs">DONE</text>
<rect x="418" y="191.5" width="29" height="14" rx="7" fill="#22272b"/><path d="M428.6 194.6 L423.4 199.5 H426.2 L424.6 202.8 L429.6 198 H426.8 Z" fill="#fff"/><text x="431" y="201.5" font-size="7.2" fill="#fff" textLength="12" lengthAdjust="spacingAndGlyphs">Any</text>
<rect x="596" y="191.5" width="23.5" height="14" rx="7" fill="#22272b"/><text x="601.5" y="201.5" font-size="7.2" fill="#fff" textLength="12.5" lengthAdjust="spacingAndGlyphs">Any</text>
<circle cx="508.6" cy="324.8" r="2.6" fill="#fff" stroke="#357de8" stroke-width="1.1"/>
<circle cx="530.3" cy="324.8" r="2.6" fill="#fff" stroke="#357de8" stroke-width="1.1"/>
<circle cx="552.4" cy="324.8" r="2.6" fill="#fff" stroke="#357de8" stroke-width="1.1"/>
<circle cx="508.6" cy="347.3" r="2.6" fill="#fff" stroke="#357de8" stroke-width="1.1"/>
<circle cx="530.3" cy="347.3" r="2.6" fill="#fff" stroke="#357de8" stroke-width="1.1"/>
<circle cx="552.4" cy="347.3" r="2.6" fill="#fff" stroke="#357de8" stroke-width="1.1"/>
<circle cx="489.4" cy="335.9" r="2.6" fill="#fff" stroke="#357de8" stroke-width="1.1"/>
<circle cx="571.5" cy="335.9" r="2.6" fill="#fff" stroke="#357de8" stroke-width="1.1"/>
<path d="M386.3 475.6 V491 M386.3 506.5 V521.5" stroke="#357de8" stroke-width="1.5" fill="none"/>
<path d="M383.3 518.2 L386.3 521.6 L389.3 518.2" stroke="#357de8" stroke-width="1.3" fill="none" stroke-linejoin="miter"/>
<circle cx="386.3" cy="473" r="2.6" fill="#fff" stroke="#357de8" stroke-width="1.2"/>
<circle cx="386.3" cy="524.2" r="2.6" fill="#fff" stroke="#357de8" stroke-width="1.2"/>
<rect x="344.5" y="491.5" width="83" height="14.8" rx="7.4" fill="#fff" stroke="#357de8" stroke-width="1.5"/>
<text x="350.5" y="501.1" font-size="7.6" fill="#292a2e" textLength="71.3" lengthAdjust="spacingAndGlyphs">Completed all checks</text>
</svg>

<div class="a" style="left:652px;top:475px;width:117px;height:93px;background:#fff;border-radius:2px;box-shadow:0 1px 4px rgba(9,30,66,.22),0 0 1px rgba(9,30,66,.3)"></div>
<svg class="a" style="left:645px;top:468px" width="130" height="107">
 <rect x="30.5" y="19.5" width="79" height="45" fill="none" stroke="#9cc2f7" stroke-width="1.2"/>
 <circle cx="54.7" cy="24.1" r="1.4" fill="#111"/>
 <rect x="66.2" y="25.2" width="8.2" height="3.6" fill="#e9eaec"/>
 <rect x="82.4" y="25.2" width="8.4" height="3.6" fill="#dcfff1"/>
 <rect x="49.2" y="27.9" width="8.2" height="3.6" fill="#e3eefd"/>
 <rect x="87" y="30.1" width="9" height="3.6" fill="#e3eefd"/>
 <rect x="64.7" y="34.3" width="9.1" height="3.6" fill="#e3eefd"/>
 <rect x="43.2" y="37" width="10.6" height="3.4" fill="#e3eefd"/>
 <rect x="44.1" y="40.5" width="8.8" height="3.3" fill="#e3eefd"/>
 <rect x="78.8" y="37.4" width="9.1" height="3.6" fill="#e3eefd"/>
 <rect x="65.3" y="43.2" width="7.3" height="3.7" fill="#e3eefd"/>
 <rect x="65.3" y="50.1" width="8.5" height="3.7" fill="#dcfff1"/>
 <rect x="66" y="57.4" width="7.5" height="3.7" fill="#dcfff1"/>
 <circle cx="17.9" cy="89" r="3.3" fill="none" stroke="#44464d" stroke-width="1.1"/><path d="M16 89 h3.8 M20.3 91.3 l2.3 2.3" stroke="#44464d" stroke-width="1.1"/>
 <path d="M29.5 89.3 H103.5" stroke="#d4d6da" stroke-width="3" stroke-linecap="round"/>
 <path d="M29.5 89.3 H67" stroke="#44464d" stroke-width="3" stroke-linecap="round"/>
 <circle cx="103.3" cy="89.3" r="1.5" fill="#44464d"/>
 <circle cx="67.1" cy="89.3" r="4.6" fill="#44464d"/>
 <circle cx="112" cy="89" r="3.3" fill="none" stroke="#44464d" stroke-width="1.1"/><path d="M110.1 89 h3.8 M112 87.1 v3.8 M114.4 91.3 l2.3 2.3" stroke="#44464d" stroke-width="1.1"/>
</svg>

<!-- canvas controls -->
<div class="btn" style="left:19px;top:165px;width:19px;height:19px;border-color:#ececed"></div>
<svg class="a" style="left:22px;top:168px" width="13" height="13"><circle cx="6.5" cy="6.5" r="4.3" stroke="#292a2e" stroke-width="1.2" fill="none"/><path d="M4.9 5.3 a1.6 1.6 0 1 1 2.2 1.5 c-0.5 0.2 -0.6 0.5 -0.6 1" stroke="#292a2e" stroke-width="1" fill="none"/><circle cx="6.5" cy="9.2" r="0.6" fill="#292a2e"/></svg>
<div class="btn" style="left:42px;top:165px;width:109px;height:19px;border-color:#ececed;border-radius:4px;box-shadow:0 1px 1px rgba(9,30,66,.13)"></div>
<div class="a" style="left:47px;top:170px;width:9px;height:9px;border:1px solid #a9acb2;border-radius:2px;background:#fff"></div>
<div class="a" style="left:61px;top:169px;font-size:8.7px;color:#292a2e;white-space:nowrap">Show transition labels</div>

<svg class="a" style="left:20px;top:558px" width="12" height="12"><path d="M1.5 1.5 h9 v7 h-6 l-2.5 2 v-2 h-0.5 z" stroke="#292a2e" stroke-width="1.1" fill="none" stroke-linejoin="round"/><path d="M3.5 5 h4.5 M6 3 l2 2 l-2 2" stroke="#292a2e" stroke-width="1" fill="none"/></svg>
<div class="a" style="left:34px;top:559px;font-size:8.8px;color:#44464d;white-space:nowrap">Give feedback</div>

<!-- ============ RIGHT PANEL ============ -->
<div id="panel" class="a"></div>

<!-- panel content -->
<div class="a" style="left:779px;top:170px;width:16px;height:16px;border-radius:50%;background:#fff;border:1px solid #dcdcdc"></div>
<svg class="a" style="left:783px;top:174px" width="8" height="8"><path d="M2.8 1.3 l2.7 2.7 l-2.7 2.7" stroke="#505258" stroke-width="1" fill="none"/></svg>
<div class="a" style="left:803px;top:160.5px;font-size:12.2px;letter-spacing:-0.4px;font-weight:700;color:#292a2e;white-space:nowrap">Transition</div>
<div class="a" style="left:803px;top:175px;font-size:7.47px;line-height:9px;color:#6b6e76;white-space:nowrap">Transitions connect statuses as actions that move<br>work through your flow.</div>
<div class="a" style="left:803px;top:206px;font-size:7.1px;font-weight:700;color:#292a2e">Name</div>
<div class="a" style="left:802px;top:219px;width:183px;height:23px;background:#e9eaec;border-radius:3px"></div>
<div class="a" style="left:808px;top:226px;font-size:8.7px;color:#292a2e;white-space:nowrap">Completed all checks</div>
<div class="a" style="left:803px;top:254px;font-size:7.2px;font-weight:700;color:#292a2e">Path</div>
<div class="a" style="left:803px;top:270px;font-size:7.4px;color:#44464d;white-space:nowrap">From status</div>
<div class="a" style="left:802px;top:282px;width:183px;height:23px;background:#e9eaec;border-radius:3px"></div>
<div class="a" style="left:808px;top:289px;width:31px;height:9px;background:#b2e672;border-radius:2px;font-size:6.7px;font-weight:700;color:#1f2a10;line-height:9px;text-align:center">REVIEW</div>
<svg class="a" style="left:969px;top:290px" width="9" height="6"><path d="M1.8 1.5 l2.7 2.7 l2.7 -2.7" stroke="#505258" stroke-width="1" fill="none"/></svg>
<div class="a" style="left:803px;top:310px;font-size:7.6px;color:#44464d;white-space:nowrap">To status</div>
<div class="a" style="left:802px;top:322px;width:183px;height:23px;background:#e9eaec;border-radius:3px"></div>
<div class="a" style="left:808px;top:329px;width:23px;height:9px;background:#b2e672;border-radius:2px;font-size:6.7px;font-weight:700;color:#1f2a10;line-height:9px;text-align:center">DONE</div>
<svg class="a" style="left:969px;top:330px" width="9" height="6"><path d="M1.8 1.5 l2.7 2.7 l2.7 -2.7" stroke="#505258" stroke-width="1" fill="none"/></svg>
<div class="a" style="left:803px;top:360.5px;font-size:7px;font-weight:700;color:#292a2e">Rules</div>
<div class="a" style="left:803px;top:371.5px;font-size:7.4px;color:#6b6e76;white-space:nowrap">Rules help you save time when moving an issue.</div>
<div class="a" style="left:803px;top:394.8px;font-size:7.2px;font-weight:700;color:#292a2e">Triggers</div>
<div class="a" style="left:803px;top:421px;font-size:7.1px;font-weight:700;color:#292a2e">Properties</div>
<svg class="a" style="left:967px;top:357px" width="12" height="72"><path d="M6 2.5 v8 M2 6.5 h8 M6 37 v8 M2 41 h8 M6 63 v8 M2 67 h8" stroke="#44464d" stroke-width="1.1"/></svg>
<div class="a" style="left:802px;top:447.5px;font-size:7.2px;color:#3b3d42;letter-spacing:0.15px;-webkit-text-stroke:0.15px #3b3d42;white-space:nowrap">EVENT</div>
<svg class="a" style="left:972px;top:445px" width="11" height="11"><circle cx="5.5" cy="5.5" r="4.6" fill="#44464d"/><path d="M5.5 4.8 v3.2" stroke="#fff" stroke-width="1.3"/><circle cx="5.5" cy="3.2" r="0.7" fill="#fff"/></svg>
<div class="a" style="left:802px;top:461px;width:183px;height:23px;background:#e9eaec;border-radius:3px"></div>
<div class="a" style="left:807px;top:467px;font-size:8.6px;color:#292a2e;white-space:nowrap">Generic Event</div>
<svg class="a" style="left:969px;top:469px" width="9" height="6"><path d="M1.8 1.5 l2.7 2.7 l2.7 -2.7" stroke="#505258" stroke-width="1" fill="none"/></svg>
<div class="a" style="left:802px;top:487px;font-size:7.45px;color:#8c4fb8;text-decoration:underline;text-decoration-color:#c5a3dc;white-space:nowrap">View and add events</div>
<svg class="a" style="left:872px;top:487px" width="9" height="9"><path d="M3.5 1.5 h-2 v6 h6 v-2 M5 1.5 h2.5 v2.5 M7.5 1.5 l-3.5 3.5" stroke="#803fa5" stroke-width="0.9" fill="none"/></svg>
<div class="btn" style="left:802px;top:559px;width:79px;height:20px"></div>
<div class="a" style="left:810px;top:564px;font-size:8.8px;color:#292a2e;white-space:nowrap">Delete transition</div>


</body></html>
